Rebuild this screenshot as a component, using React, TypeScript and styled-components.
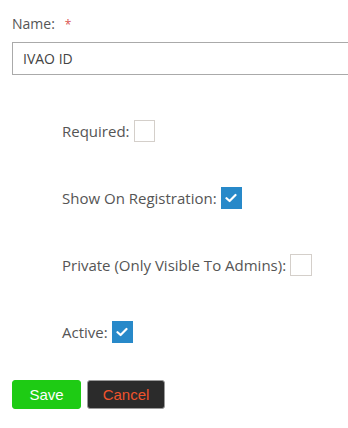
import React from "react";
import styled, { createGlobalStyle } from "styled-components";

const Global = createGlobalStyle`
  html, body { margin: 0; padding: 0; background: #fff; }
  body { font-family: "Open Sans", Lato, sans-serif; color: #555; overflow: hidden; }
`;

const Page = styled.div`
  width: 348px;
  height: 428px;
  padding: 15px 0 0 12px;
  box-sizing: border-box;
  overflow: hidden;
`;

const FieldLabel = styled.div`
  display: flex;
  align-items: center;
  gap: 10px;
  font-size: 14px;
  line-height: 18px;
  color: #555;
  height: 18px;
`;

const Star = styled.span`
  color: #d9534f;
  font-size: 12px;
  margin-top: 2px;
`;

const TextInput = styled.input`
  display: block;
  margin-top: 9px;
  width: 346px;
  height: 33px;
  box-sizing: border-box;
  border: 1px solid #aaa;
  padding: 0 10px;
  font-family: "Open Sans", Lato, sans-serif;
  font-size: 14px;
  color: #444;
  outline: none;
`;

const Options = styled.div`
  display: flex;
  flex-direction: column;
  gap: 45.5px;
  padding: 45px 0 0 50px;
`;

const OptionRow = styled.label`
  display: flex;
  align-items: center;
  gap: 4px;
  height: 21.5px;
  font-size: 15px;
  color: #555;
`;

const Box = styled.span<{ $checked: boolean }>`
  width: 21.5px;
  height: 21.5px;
  box-sizing: border-box;
  display: inline-flex;
  align-items: center;
  justify-content: center;
  background: ${(p) => (p.$checked ? "#2889c9" : "#fff")};
  border: 1px solid ${(p) => (p.$checked ? "#2889c9" : "#d4cfca")};
`;

const Buttons = styled.div`
  display: flex;
  gap: 6px;
  margin-top: 37px;
`;

const Btn = styled.button<{ $variant: "save" | "cancel" }>`
  height: 29px;
  width: ${(p) => (p.$variant === "save" ? "69px" : "78px")};
  border-radius: 3px;
  font-family: "Liberation Sans", Arial, sans-serif;
  font-size: 15px;
  padding: 0;
  cursor: pointer;
  background: ${(p) => (p.$variant === "save" ? "#1ecb14" : "#2b2b2b")};
  color: ${(p) => (p.$variant === "save" ? "#fff" : "#f0532c")};
  border: 1px solid ${(p) => (p.$variant === "save" ? "#1ecb14" : "#9a9a9a")};
`;

const Check = () => (
  <svg width="12" height="10" viewBox="0 0 12 10">
    <path d="M1.5 5.2 L4.6 8 L10.5 2" stroke="#fff" strokeWidth="2.2" fill="none" strokeLinecap="round" strokeLinejoin="round" />
  </svg>
);

const options = [
  { label: "Required:", checked: false },
  { label: "Show On Registration:", checked: true },
  { label: "Private (Only Visible To Admins):", checked: false },
  { label: "Active:", checked: true },
];

export default function App() {
  return (
    <Page>
      <Global />
      <FieldLabel>
        Name: <Star>*</Star>
      </FieldLabel>
      <TextInput defaultValue="IVAO ID" />
      <Options>
        {options.map((o) => (
          <OptionRow key={o.label}>
            {o.label}
            <Box $checked={o.checked}>{o.checked && <Check />}</Box>
          </OptionRow>
        ))}
      </Options>
      <Buttons>
        <Btn $variant="save">Save</Btn>
        <Btn $variant="cancel">Cancel</Btn>
      </Buttons>
    </Page>
  );
}
